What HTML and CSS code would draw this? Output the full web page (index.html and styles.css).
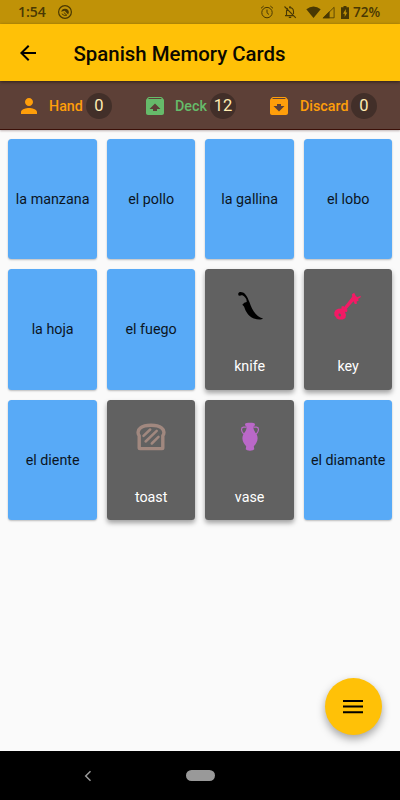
FILE: index.html
```html
<!DOCTYPE html>
<html lang="en">
<head>
<meta charset="utf-8">
<title>Spanish Memory Cards</title>
<link rel="stylesheet" href="styles.css">
</head>
<body>
<div class="screen">
  <div class="status">
    <span class="clock">1:54</span>
    <svg class="st-app" width="16" height="16" viewBox="0 0 16 16"><circle cx="8" cy="8" r="6.4" fill="none" stroke="currentColor" stroke-width="1.2"/><path d="M4.2 7.800A3.900 3.900 0 0 1 11.900 8.200L11.100 10.600 7.600 6.800Z" fill="currentColor"/><path d="M4.800 9.800Q7 12.300 9.800 11.200L6.800 8.500" fill="none" stroke="currentColor"/></svg>
    <span class="spacer"></span>
    <svg class="st-alarm" width="14" height="14" viewBox="0 0 14 14" fill="none" stroke="currentColor" stroke-width="1"><circle cx="7" cy="7.6" r="5.2"/><path d="M1 3.3 3.7 1M13 3.3 10.3 1M7 4.6V7.8L9 9.5"/></svg>
    <svg class="st-bell" width="14" height="14" viewBox="0 0 14 14" fill="none" stroke="currentColor" stroke-width="1.1"><path d="M1.5 1.5 12.8 12.8M3.5 10.2V6Q3.7 4.1 4.8 3.2M6 2.7Q10.2 2.3 10.5 6.3V9M2 10.6H10.5M7 1V2.7M5.8 12.4H8.2"/></svg>
    <svg class="st-wifi" width="15" height="14" viewBox="0 0 15 14"><path d="M.3 4.2Q7.5-1.4 14.7 4.2L7.5 13Z" fill="currentColor"/></svg>
    <svg class="st-signal" width="13" height="13" viewBox="0 0 13 13"><path d="M.5 12.2 7.6 5.1V12.2Z" fill="currentColor"/><path d="M1.4 11.8 12.1 1.3V11.8Z" fill="none" stroke="currentColor" stroke-width=".8"/></svg>
    <svg class="st-battery" width="8" height="13" viewBox="0 0 8 13"><path fill-rule="evenodd" d="M2.5 0h3v1.3H8V13H0V1.3H2.5ZM4.8 3 2 7.7H3.7V11L6.3 6.4H4.8Z" fill="currentColor"/></svg>
    <span class="percent">72%</span>
  </div>
  <header class="appbar">
    <svg width="24" height="24" viewBox="0 0 24 24"><path d="M20 11H7.83l5.59-5.59L12 4l-8 8 8 8 1.41-1.41L7.83 13H20v-2z"/></svg>
    <h1>Spanish Memory Cards</h1>
  </header>
  <section class="stats">
    <div class="stat amber">
      <svg width="24" height="24" viewBox="0 0 24 24"><path d="M12 12c2.21 0 4-1.79 4-4s-1.79-4-4-4-4 1.79-4 4 1.790 4 4 4zm0 2c-2.670 0-8 1.340-8 4v2h16v-2c0-2.660-5.330-4-8-4z"/></svg>
      <span class="label hand">Hand</span><span class="count">0</span>
    </div>
    <div class="stat green">
      <svg width="24" height="24" viewBox="0 0 24 24"><path d="M20.550 5.220l-1.390-1.680C18.880 3.210 18.470 3 18 3H6c-.47 0-.88.210-1.150.550L3.460 5.220C3.170 5.570 3 6.010 3 6.500V19c0 1.100.890 2 2 2h14c1.100 0 2-.9 2-2V6.500c0-.49-.17-.93-.45-1.280zM12 9.500l5.500 5.500H14v2h-4v-2H6.500L12 9.500zM5.120 5l.820-1h12l.930 1H5.120z"/></svg>
      <span class="label deck">Deck</span><span class="count">12</span>
    </div>
    <div class="stat amber">
      <svg width="24" height="24" viewBox="0 0 24 24"><path d="M20.540 5.230l-1.390-1.680C18.880 3.210 18.470 3 18 3H6c-.47 0-.88.210-1.160.550L3.460 5.230C3.170 5.570 3 6.020 3 6.500V19c0 1.100.9 2 2 2h14c1.100 0 2-.9 2-2V6.500c0-.48-.17-.93-.46-1.270zM12 17.500L6.500 12H10v-2h4v2h3.500L12 17.500zM5.120 5l.810-1h12l.940 1H5.120z"/></svg>
      <span class="label discard">Discard</span><span class="count">0</span>
    </div>
  </section>
  <main class="cards">
    <div class="card">la manzana</div>
    <div class="card">el pollo</div>
    <div class="card">la gallina</div>
    <div class="card">el lobo</div>
    <div class="card">la hoja</div>
    <div class="card">el fuego</div>
    <div class="card open">
      <svg width="30" height="30" viewBox="0 0 30 30"><path d="M3.300 2.300C4.500.3 8 1 10 3C12.400 5.500 13.300 8.500 14.500 11.300C16.500 17.500 20.500 25.500 28 27.600C26 29.300 20.500 28.600 16.700 26.400C11.800 23.300 10.300 19 9 15.500L7.300 13.700L9.300 11.700L11.600 11C12.200 8.500 9.900 5.300 7.400 4.300C5.800 3.600 5.200 5.600 3.300 4.300Z" fill="#000"/></svg>
      <span>knife</span>
    </div>
    <div class="card open">
      <svg width="30" height="30" viewBox="0 0 30 30"><g fill="#f31a65"><path fill-rule="evenodd" d="M5.300 17.700 8.600 17.400 8.400 15.600 10.400 15 12 17 14.500 18.700 14 21 11.900 20.800 13 24 12.400 27 10 28.400 6 28.400 3.600 27.500 3 26 1.500 24.800 1.300 21.600 2.600 19ZM5.800 22.600 5.500 24.300 6.600 25.600 8 25.200 7.800 23.600 6.900 22.600Z"/><path d="M10.400 17 19.200 5.700 18.900 3.300 21.200 1.800 22.500 4.600 24.200 6.200 27.900 4.700 27.400 6.400 25.200 7.700 25.500 10 23.700 10.200 23.800 13 21.800 13 20.500 10.300 12.500 19.300Z"/></g></svg>
      <span>key</span>
    </div>
    <div class="card">el diente</div>
    <div class="card open">
      <svg width="30" height="30" viewBox="0 0 30 30" fill="none" stroke="#a1887f"><path stroke-width="3.400" stroke-linejoin="round" d="M3.200 13.600C1.300 11.600 2 7.800 4.500 5.900C9 2.300 21 2.300 25.500 5.900C28 7.800 28.700 11.600 26.800 13.600V25.800Q26.800 26.600 26 26.600H4Q3.200 26.600 3.200 25.800Z"/><path stroke-width="2.500" stroke-linecap="round" d="M7.500 13.900 14.200 7.500M9.600 19.500 20.700 8.800M15.800 21.500 22.500 14.900"/></svg>
      <span>toast</span>
    </div>
    <div class="card open">
      <svg width="30" height="30" viewBox="0 0 30 30"><path d="M10 2C10 .2 20 .2 20 2C20 3.600 19.200 4 18.400 4.800C18.200 7.500 19.600 9.500 21.500 12C24.500 17.500 20.800 22 18.800 24.300L19.300 27.300Q18.500 28.700 15 28.700Q11.500 28.700 10.700 27.300L11.200 24.300C9.200 22 5.500 17.500 8.500 12C10.400 9.500 11.800 7.500 11.600 4.800C10.800 4 10 3.600 10 2Z" fill="#ba68c8"/><path d="M11.600 5.200H8.500C5.500 5.600 6.200 9.500 8.700 12M18.400 5.200H21.500C24.500 5.600 23.800 9.500 21.300 12" fill="none" stroke="#ba68c8" stroke-width="1.200"/></svg>
      <span>vase</span>
    </div>
    <div class="card">el diamante</div>
  </main>
  <button class="fab" aria-label="Menu"><svg width="24" height="24" viewBox="0 0 24 24"><path d="M2 5h20v2H2zm0 5.500h20v2H2zm0 5.700h20v2H2z"/></svg></button>
  <nav class="navbar">
    <svg width="8" height="12" viewBox="0 0 8 12" fill="none" stroke="#999" stroke-width="1.500"><path d="M6.500 1.300 1.700 6 6.500 10.700"/></svg>
    <span class="pill"></span>
  </nav>
</div>
</body>
</html>
```
FILE: styles.css
```css
* { box-sizing: border-box; }
body { margin: 0; font-family: Roboto, sans-serif; background: #fafafa; }
.screen { position: relative; width: 400px; height: 800px; display: flex; flex-direction: column; overflow: hidden; }
svg { display: block; flex: none; }

.status { height: 24px; flex: none; display: flex; align-items: center; padding: 0 18px; background: #c09207; color: #493803; font-family: "Open Sans", sans-serif; font-weight: 600; font-size: 13.500px; line-height: 20px; }
.clock { width: 39px; font-size: 14px; padding-bottom: 1px; }
.spacer { flex: 1; }
.st-bell { margin-left: 9px; }
.st-wifi { margin-left: 9px; }
.st-signal { margin-left: 1px; }
.st-battery { margin-left: 6px; }
.percent { width: 29px; margin-left: 4px; padding-bottom: 1px; }

.appbar { height: 57px; flex: none; display: flex; align-items: center; padding: 1px 16px 0; background: #ffc107; position: relative; box-shadow: 0 1px 3px rgba(0, 0, 0, .5); }
.appbar h1 { margin: 1px 0 0 33.500px; font-size: 20.400px; font-weight: 500; line-height: 24px; color: #0c0900; white-space: nowrap; }

.stats { height: 49px; flex: none; display: flex; justify-content: space-between; align-items: center; padding: 1px 23px 0 17px; background: #5d4037; border-bottom: 1px solid #3b1008; box-shadow: 0 1px 2px rgba(60, 20, 20, .3); }
.stat { display: flex; align-items: center; font-weight: 500; font-size: 14.300px; }
.stat svg { fill: currentColor; }
.amber { color: #ff9e0a; }
.green { color: #66bb6a; }
.label { margin-left: 8px; white-space: nowrap; }
.hand { width: 37px; }
.deck { width: 35px; }
.discard { width: 51px; margin-left: 9px; }
.count { width: 26px; height: 26px; border-radius: 50%; background: #422f29; color: #ffecb3; display: flex; align-items: center; justify-content: center; font-weight: 400; font-size: 16.500px; }

.cards { flex: 1; display: grid; grid-template-columns: repeat(4, 1fr); grid-auto-rows: 120.500px; gap: 10px; align-content: start; padding: 8.500px 7.600px 0 8.400px; }
.card { display: flex; align-items: center; justify-content: center; border-radius: 3.500px; background: #58aaf7; color: #0b151f; font-size: 14.300px; white-space: nowrap; box-shadow: 0 1px 2px rgba(0, 0, 0, .25); }
.open { flex-direction: column; justify-content: flex-start; padding-top: 22px; background: #616161; color: #fff; box-shadow: 0 3px 5px rgba(0, 0, 0, .36); }
.open span { margin-top: 37px; line-height: 17px; }

.fab { position: absolute; left: 325px; top: 678px; width: 57px; height: 57px; padding: 0 1px 0 0; border: 0; border-radius: 50%; background: #ffc107; display: flex; align-items: center; justify-content: center; box-shadow: 0 4px 8px rgba(0, 0, 0, .35); }

.navbar { height: 49px; flex: none; display: flex; align-items: center; gap: 94px; padding-left: 84px; background: #000; }
.pill { width: 29px; height: 11px; border-radius: 6px; background: #999; }
```
